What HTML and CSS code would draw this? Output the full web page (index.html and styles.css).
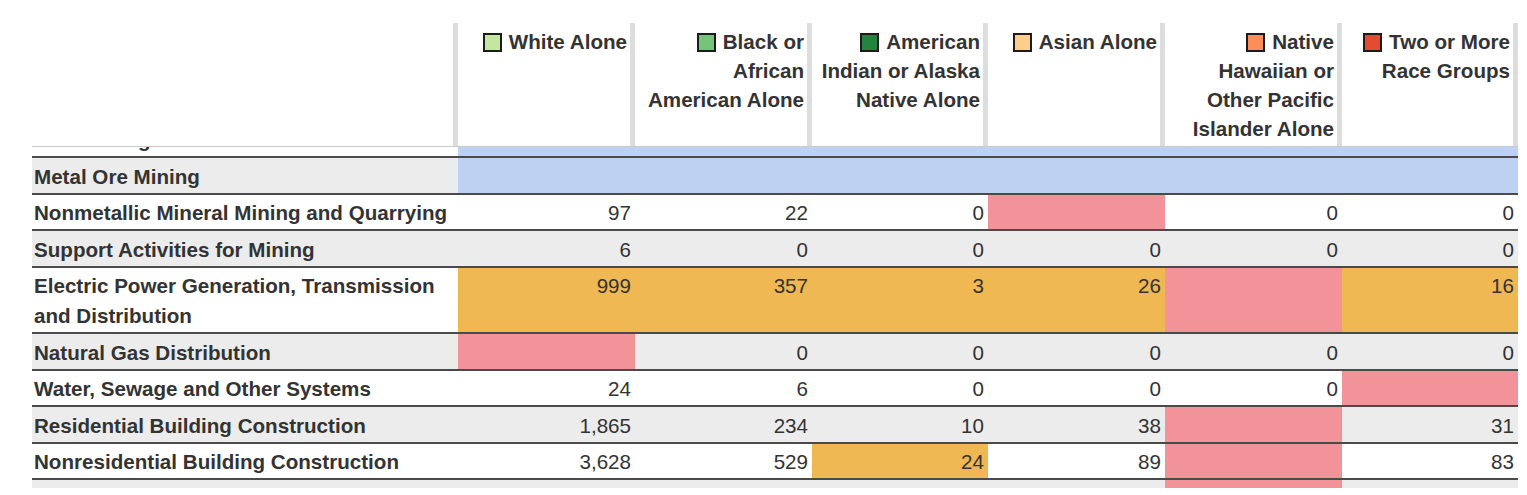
FILE: index.html
```html
<!DOCTYPE html>
<html lang="en">
<head>
<meta charset="utf-8">
<title>Employment by Race and Industry</title>
<link rel="stylesheet" href="styles.css">
</head>
<body>
<div class="table">
  <div class="head cols">
    <div class="hcell hlabel"></div>
    <div class="hcell"><span class="nw"><span class="sw sw-white"></span>White</span> Alone</div>
    <div class="hcell"><span class="nw"><span class="sw sw-black"></span>Black</span> or African American Alone</div>
    <div class="hcell"><span class="nw"><span class="sw sw-aian"></span>American</span> Indian or Alaska Native Alone</div>
    <div class="hcell"><span class="nw"><span class="sw sw-asian"></span>Asian</span> Alone</div>
    <div class="hcell"><span class="nw"><span class="sw sw-nhpi"></span>Native</span> Hawaiian or Other Pacific Islander Alone</div>
    <div class="hcell"><span class="nw"><span class="sw sw-two"></span>Two</span> or More Race Groups</div>
  </div>
  <div class="body">
    <div class="row cols first">
      <div class="label">Coal Mining</div>
      <div class="num blue"></div><div class="num blue"></div><div class="num blue"></div><div class="num blue"></div><div class="num blue"></div><div class="num blue"></div>
    </div>
    <div class="row cols alt">
      <div class="label">Metal Ore Mining</div>
      <div class="num blue"></div><div class="num blue"></div><div class="num blue"></div><div class="num blue"></div><div class="num blue"></div><div class="num blue"></div>
    </div>
    <div class="row cols">
      <div class="label">Nonmetallic Mineral Mining and Quarrying</div>
      <div class="num">97</div><div class="num">22</div><div class="num">0</div><div class="num pink"></div><div class="num">0</div><div class="num">0</div>
    </div>
    <div class="row cols alt">
      <div class="label">Support Activities for Mining</div>
      <div class="num">6</div><div class="num">0</div><div class="num">0</div><div class="num">0</div><div class="num">0</div><div class="num">0</div>
    </div>
    <div class="row cols">
      <div class="label">Electric Power Generation, Transmission and Distribution</div>
      <div class="num orange">999</div><div class="num orange">357</div><div class="num orange">3</div><div class="num orange">26</div><div class="num pink"></div><div class="num orange">16</div>
    </div>
    <div class="row cols alt">
      <div class="label">Natural Gas Distribution</div>
      <div class="num pink"></div><div class="num">0</div><div class="num">0</div><div class="num">0</div><div class="num">0</div><div class="num">0</div>
    </div>
    <div class="row cols">
      <div class="label">Water, Sewage and Other Systems</div>
      <div class="num">24</div><div class="num">6</div><div class="num">0</div><div class="num">0</div><div class="num">0</div><div class="num pink"></div>
    </div>
    <div class="row cols alt">
      <div class="label">Residential Building Construction</div>
      <div class="num">1,865</div><div class="num">234</div><div class="num">10</div><div class="num">38</div><div class="num pink"></div><div class="num">31</div>
    </div>
    <div class="row cols">
      <div class="label">Nonresidential Building Construction</div>
      <div class="num">3,628</div><div class="num">529</div><div class="num orange">24</div><div class="num">89</div><div class="num pink"></div><div class="num">83</div>
    </div>
    <div class="row cols alt">
      <div class="label">Utility System Construction</div>
      <div class="num"></div><div class="num"></div><div class="num"></div><div class="num"></div><div class="num pink"></div><div class="num"></div>
    </div>
  </div>
</div>
</body>
</html>
```
FILE: styles.css
```css
html, body {
  margin: 0;
  padding: 0;
  background: #fff;
}
body {
  font-family: "Liberation Sans", Arial, Helvetica, sans-serif;
  font-size: 20.6px;
  color: #333;
}
.table {
  margin: 23px 0 0 32px;
  width: 1486px;
}
.cols {
  display: grid;
  grid-template-columns: 426px 177px 177px 176px 177px 177px 176px;
}
.head {
  height: 124px;
  box-sizing: border-box;
  border-bottom: 1px solid #c9c9c9;
}
.hcell {
  box-sizing: border-box;
  border-right: 5px solid #dddddd;
  padding: 3.5px 3px 0 6px;
  text-align: right;
  font-weight: bold;
  line-height: 29px;
}
.nw {
  white-space: nowrap;
}
.sw {
  display: inline-block;
  box-sizing: border-box;
  width: 19px;
  height: 19px;
  border: 2px solid #1c1c1c;
  margin-right: 7px;
  vertical-align: -3px;
}
.sw-white { background: #c3e7a1; }
.sw-black { background: #76c47a; }
.sw-aian { background: #22843f; }
.sw-asian { background: #fdcd8c; }
.sw-nhpi { background: #fc8c58; }
.sw-two { background: #e34b33; }
.body {
  height: 341px;
  overflow: hidden;
}
.row {
  border-bottom: 2px solid #4a4a4a;
  background: #fff;
  line-height: 30px;
}
.row.alt {
  background: #ececec;
}
.row.first {
  margin-top: -25.5px;
}
.label {
  padding: 3.5px 3px 1px 2px;
  font-weight: bold;
}
.num {
  padding: 3.5px 4px 1px 4px;
  text-align: right;
}
.blue { background: #bdd1f2; }
.orange { background: #efb852; }
.pink { background: #f29399; }
```
